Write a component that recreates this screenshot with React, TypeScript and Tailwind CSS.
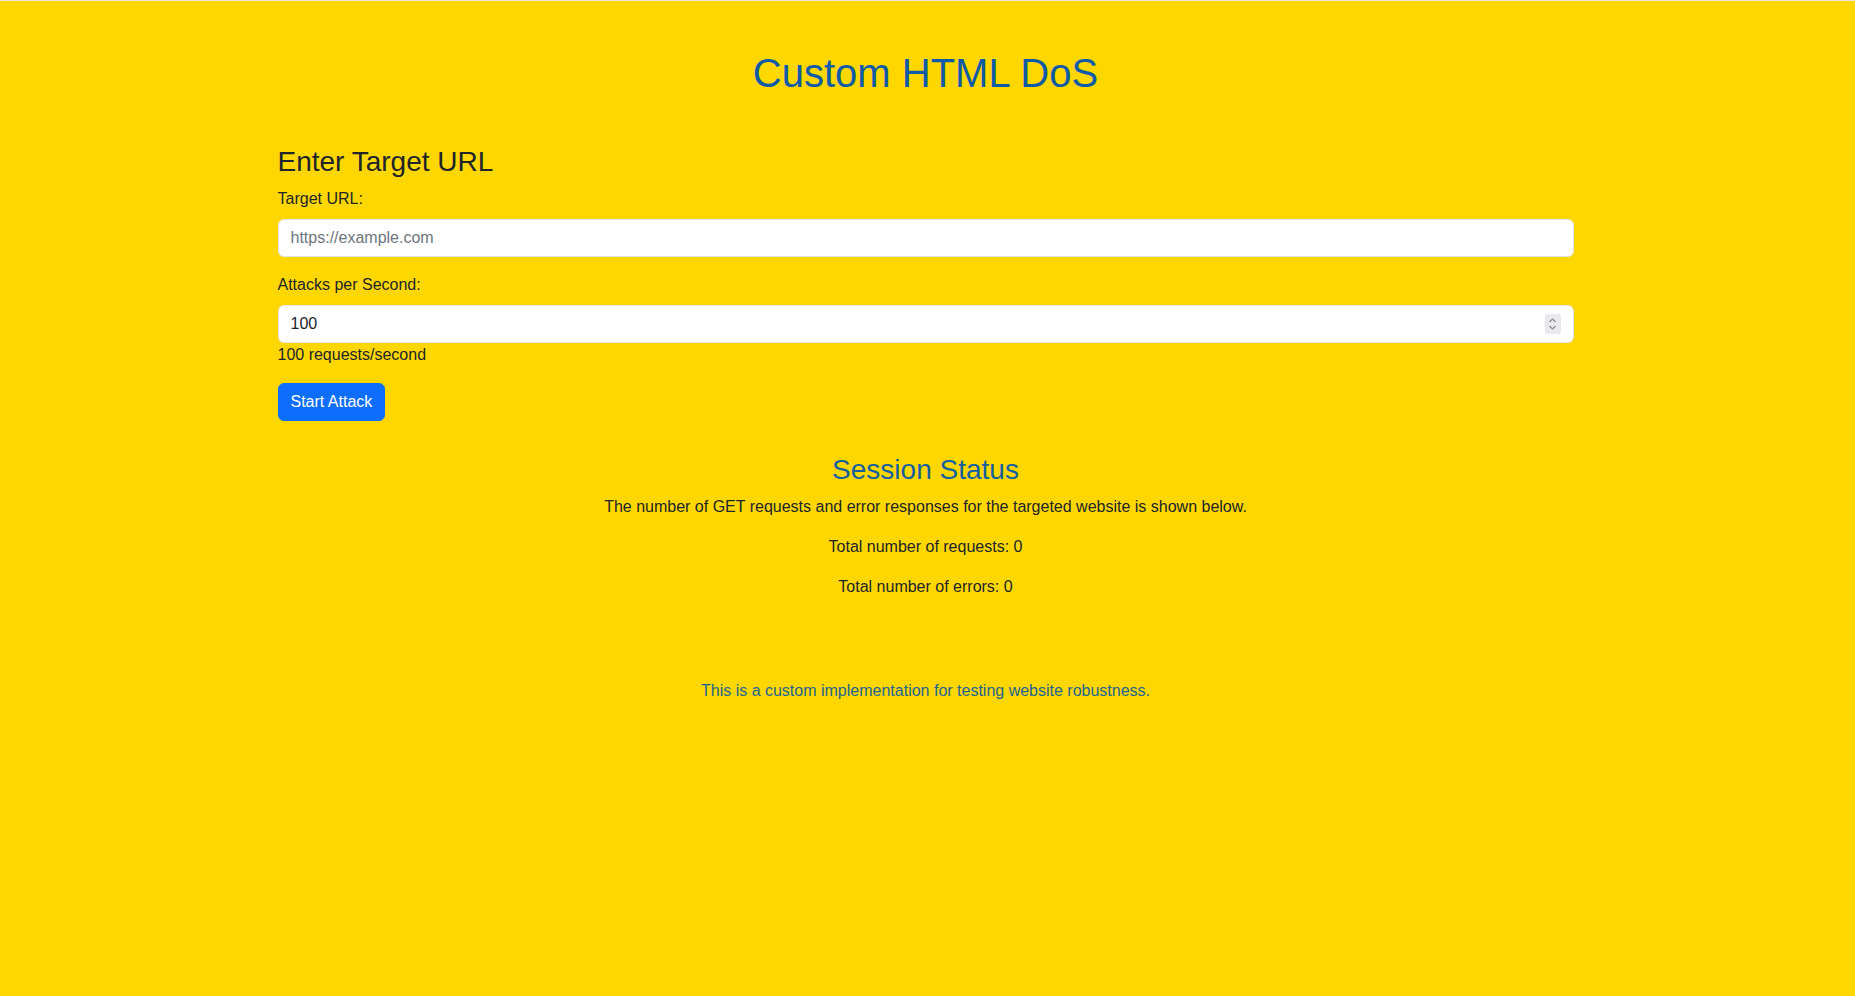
import * as React from "react"

// Static mock of the form screen; no request logic is wired up.
function Spinner() {
  return (
    <div className="pointer-events-none absolute right-[13px] top-1/2 flex h-[20px] w-[16px] -translate-y-1/2 flex-col items-center justify-center rounded-[2px] bg-[#e9e9ed]">
      <svg width="9" height="14" viewBox="0 0 9 14" fill="none" stroke="#8a8a8a" strokeWidth="1.2">
        <path d="M1.5 5 L4.5 2 L7.5 5" />
        <path d="M1.5 9 L4.5 12 L7.5 9" />
      </svg>
    </div>
  )
}

export default function App() {
  return (
    <div className="min-h-screen border-t border-[#e4e4e4] bg-[#ffd700] pr-[4px] font-['Liberation_Sans',Arial,sans-serif] text-base leading-6 text-[#212529]">
      <div className="mx-auto max-w-[1320px] px-3 pt-12">
        <h1 className="text-center text-[40px] leading-[1.2] text-[#0d5aa7]">Custom HTML DoS</h1>

        {/* Form */}
        <section className="mt-12">
          <h3 className="mb-2 text-[28px] leading-[1.2]">Enter Target URL</h3>

          <label className="mb-2 block">Target URL:</label>
          <input
            type="text"
            placeholder="https://example.com"
            className="mb-4 block h-[38px] w-full rounded-md border border-[#dee2e6] bg-white px-3 text-[#212529] outline-none placeholder:text-[#6c757d]"
          />

          <label className="mb-2 block">Attacks per Second:</label>
          <div className="relative">
            <input
              type="text"
              defaultValue="100"
              className="block h-[38px] w-full rounded-md border border-[#dee2e6] bg-white px-3 text-[#212529] outline-none"
            />
            <Spinner />
          </div>
          <div>100 requests/second</div>

          <button
            type="button"
            className="mt-4 rounded-md border border-[#0d6efd] bg-[#0d6efd] px-3 py-1.5 text-white"
          >
            Start Attack
          </button>
        </section>

        {/* Status */}
        <section className="mt-8 text-center">
          <h3 className="mb-[9px] text-[28px] leading-[1.2] text-[#135f9f]">Session Status</h3>
          <p className="mb-4">The number of GET requests and error responses for the targeted website is shown below.</p>
          <p className="mb-4">Total number of requests: 0</p>
          <p className="mb-4">Total number of errors: 0</p>
        </section>

        <footer className="mt-20 text-center text-[#22648f]">
          <p>This is a custom implementation for testing website robustness.</p>
        </footer>
      </div>
    </div>
  )
}
